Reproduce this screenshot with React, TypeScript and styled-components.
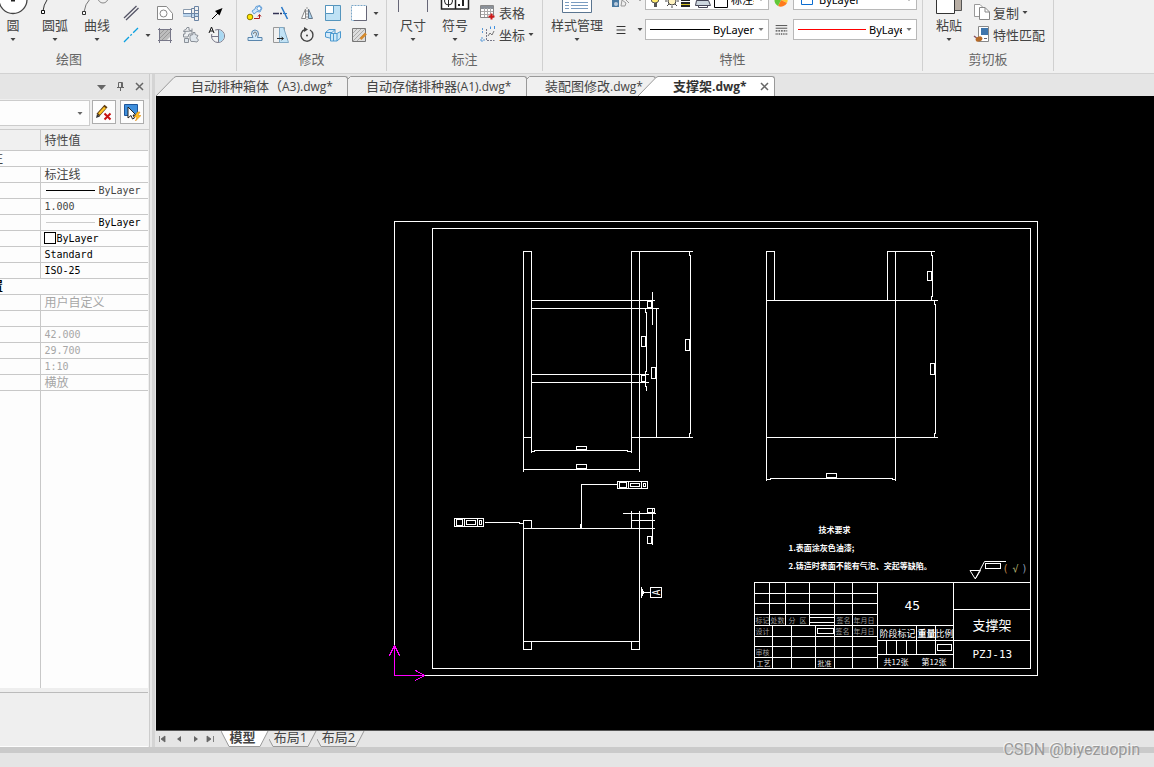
import React from "react";
import styled, { createGlobalStyle, css } from "styled-components";

const GlobalStyle = createGlobalStyle`
  * { box-sizing: border-box; }
  body {
    margin: 0;
    background: #e5e5e5;
    color: #444;
    font-family: "Open Sans", "Noto Sans CJK SC", sans-serif;
    font-size: 13px;
  }
  button, select { font: inherit; color: inherit; border: 0; padding: 0; margin: 0; background: none; }
  select { appearance: none; outline: none; }
`;

const Page = styled.div`
  display: flex;
  flex-direction: column;
  min-height: 100vh;
  overflow: hidden;
`;

/* ---------- ribbon ---------- */

const Ribbon = styled.header`
  display: flex;
  height: 74px;
  padding-bottom: 2px;
  background: #f0f0f0;
  border-bottom: 1px solid #d2d2d2;
  overflow: hidden;
`;

const Group = styled.section<{ $width: number; $scrolled?: number }>`
  display: flex;
  flex-direction: column;
  justify-content: flex-end;
  flex: none;
  width: ${(p) => p.$width}px;
  margin-left: ${(p) => -(p.$scrolled ?? 0)}px;
  border-right: 1px solid #d0d0d0;
`;

const GroupBody = styled.div<{ $end?: boolean }>`
  display: flex;
  align-items: flex-end;
  justify-content: ${(p) => (p.$end ? "flex-end" : "flex-start")};
  padding: ${(p) => (p.$end ? "0 6px 0 0" : "0 0 0 5px")};
`;

const GroupTitle = styled.h2`
  margin: 0;
  height: 23px;
  line-height: 23px;
  font-size: 13px;
  font-weight: 400;
  color: #666;
  text-align: center;
`;

const BigButton = styled.button<{ $width?: number }>`
  display: flex;
  flex-direction: column;
  align-items: center;
  justify-content: flex-end;
  flex: none;
  width: ${(p) => p.$width ?? 42}px;
  height: 68px;
  padding-bottom: 4px;
  line-height: 20px;
  white-space: nowrap;
  svg { flex: none; display: block; }
`;

const ToolGrid = styled.div<{ $cols: string }>`
  display: grid;
  grid-template-columns: ${(p) => p.$cols};
  grid-auto-rows: 22px;
  padding-bottom: 2px;
`;

const ToolButton = styled.button`
  display: flex;
  align-items: center;
  justify-content: center;
  svg { display: block; }
`;

const RowButton = styled.button`
  display: flex;
  align-items: center;
  gap: 2px;
  height: 22px;
  white-space: nowrap;
  svg { display: block; flex: none; }
`;

const RowTools = styled.div`
  display: flex;
  flex-direction: column;
  padding: 0 0 3px 3px;
`;

const PropertyGrid = styled.div`
  display: grid;
  flex: none;
  grid-template-columns: 28px 10px 124px 24px 124px;
  grid-auto-rows: 21px;
  row-gap: 9px;
  padding-bottom: 8px;
  margin-left: 1px;
`;

const ComboBox = styled.div`
  display: flex;
  align-items: center;
  gap: 3px;
  padding: 0 3px 0 4px;
  background: #fff;
  border: 1px solid #b8b8b8;
  font-family: "Noto Sans", "Noto Sans CJK SC", sans-serif;
  font-size: 11px;
  color: #000;
  svg { display: block; flex: none; }
  select { flex: 1; min-width: 0; height: 19px; overflow: hidden; text-overflow: clip; }
`;

const ComboLine = styled.i<{ $width: number; $color: string }>`
  flex: none;
  width: ${(p) => p.$width}px;
  height: 1px;
  background: ${(p) => p.$color};
`;

const Caret = ({ color = "#444" }: { color?: string }) => (
  <svg width="8" height="9" viewBox="0 0 8 9" aria-hidden="true">
    <path d="M1.500 3H6.500L4 6Z" fill={color} />
  </svg>
);

const Icon = ({ size = 18, children }: { size?: number; children: React.ReactNode }) => (
  <svg width={size} height={size} viewBox="0 0 18 18" fill="none" stroke="#667" aria-hidden="true">
    {children}
  </svg>
);

const icons = {
  parallel: (
    <Icon><path d="M2 14 14.500 2M4 16 16.500 4" stroke="#556" strokeWidth="1.300" /></Icon>
  ),
  centerLine: (
    <Icon><path d="M2 16 16 2" stroke="#0aa0e0" strokeWidth="1.300" strokeDasharray="7 2 2 2" /></Icon>
  ),
  region: (
    <Icon><path d="M1.500 2.500H10.500L16.500 9.500V15.500H1.500Z" fill="#fff" stroke="#888" /><circle cx="7.500" cy="9.500" r="3.500" stroke="#888" /></Icon>
  ),
  bolt: (
    <Icon>
      <path d="M1.500 5.500H9.500V12.500H1.500Z" fill="#fff" stroke="#8a9aac" />
      <path d="M1 9H17V12.500H1Z" fill="#bcd6ee" stroke="none" />
      <path d="M9.500 4.500H12.500V13.500H9.500ZM12.500 2.500H16.500V16.500H12.500Z" stroke="#6a84a4" />
      <path d="M1 9.500H16M12 6.500H17M12 12.500H17" stroke="#6a84a4" />
    </Icon>
  ),
  arrow: (
    <Icon><path d="M4 15 11 8" stroke="#000" /><path d="M14.500 4 11.500 11.500 7 7Z" fill="#000" stroke="none" /></Icon>
  ),
  hatch: (
    <Icon>
      <path d="M3.500 2V17M14.500 2V17M2 3.500H16M2 14.500H16" stroke="#778" />
      <path d="M4 4H14V11L11 14H4Z" fill="#bdbdbd" stroke="none" />
      <path d="M4 8 8 4M4 12 12 4M6 14 14 6" stroke="#999" />
    </Icon>
  ),
  gear: (
    <Icon>
      <path d="M1.500 4.500 4 3.500 5 1.500H7V4L10 5V2.500M10 5V8H7L6 11H1.500V8H3V5.500H1.500Z" stroke="#8a9098" fill="#eceef0" />
      <path d="M8 9.500 11 8.500V6.500H13V8.500L16 9.500 14.500 12 16.500 14 15 16 12 15.500H9L8 13ZM2.500 12.500H6.500V16.500H2.500Z" stroke="#8a9098" fill="#dfe6ec" />
    </Icon>
  ),
  clock: (
    <Icon>
      <circle cx="10" cy="10" r="6.500" fill="#f4f4f4" stroke="#778" />
      <path d="M10 10V4A6 6 0 0 1 16 10 6 6 0 0 1 10 16Z" fill="#a9d8f2" stroke="none" />
      <path d="M0 0H7V8H0Z" fill="#f0f0f0" stroke="none" />
      <path d="M1 7 3.500 1 6 7M2 5H5" stroke="#111" />
      <path d="M4 10.500H10M10.500 4V16" stroke="#778" />
    </Icon>
  ),
  copyShape: (
    <Icon>
      <path d="M6 7 9 5 10 2.500 14 1.500 16 4 14 8 11 7.500 8 10Z" fill="#cfe8fa" stroke="#66a0d8" />
      <circle cx="13" cy="4.500" r="2" fill="#fff" stroke="#66a0d8" />
      <circle cx="4" cy="13" r="2.800" fill="#ffe500" stroke="#8a7a00" />
      <path d="M8 14.500H13.500V11M12 12.500 13.500 10.500 15 12.500" stroke="#b02020" />
    </Icon>
  ),
  trim: (
    <Icon><path d="M1 9.500H7M8 9.500H10" stroke="#335" strokeWidth="1.400" /><path d="M11 9.500H15" stroke="#2878c8" /><path d="M9.500 3 15.500 15" stroke="#2878c8" strokeWidth="1.500" /></Icon>
  ),
  mirror: (
    <Icon><path d="M7.500 5V14.500H3.500Z" fill="#fff" stroke="#888" /><path d="M10.500 5V14.500H14.500Z" fill="#a9d2ef" stroke="#678" /><path d="M9 3V16" stroke="#999" strokeDasharray="2 1" /></Icon>
  ),
  scale: (
    <Icon><path d="M1.500 1.500H16.500V16.500H1.500Z" fill="#bfe2f5" stroke="#5595bd" /><path d="M1.500 1.500H9.500V9.500H1.500Z" fill="#fff" stroke="#5595bd" /></Icon>
  ),
  dashedRect: (
    <Icon><path d="M1.500 1.500H16.500V16.500H1.500Z" fill="#fff" stroke="#7aa7c9" strokeDasharray="2 1" /><path d="M16.500 2V16.500H4" stroke="#667" /></Icon>
  ),
  offset: (
    <Icon><path d="M2 14.500H16V11.500H11.500L12.500 8A3.500 4 0 0 0 5.500 8L7 11.500H2Z" fill="#d4eafa" stroke="#5a86ad" /><path d="M7.500 8A1.500 2 0 0 1 10.500 8L9.500 10.500" stroke="#777" /></Icon>
  ),
  chamfer: (
    <Icon><path d="M1.500 1.500H12.500V16.500H1.500Z" stroke="#999" /><path d="M7.500 1.500H11.500L16.500 16.500H7.500Z" fill="#c2e3f6" stroke="#7fa8c4" /><path d="M5 12.500H11M9.500 11 11.500 12.500 9.500 14" stroke="#222" /></Icon>
  ),
  rotate: (
    <Icon><path d="M7 3.500A6 6 0 1 0 12 4" stroke="#444" strokeWidth="1.400" /><path d="M6 1 10 3.500 6 6Z" fill="#444" stroke="none" /><circle cx="9" cy="9.500" r="1" fill="#444" stroke="none" /></Icon>
  ),
  solid: (
    <Icon><path d="M1.500 6.500 5 3.500H11L8 6.500V12.500L1.500 11ZM8 6.500H1.500M8 12.500 11 9.500V3.500" fill="#d5eafa" stroke="#4c99cf" /><path d="M6.500 7.500H13L16.500 5.500V12L13 15H6.500ZM13 7.500V15M9.500 7.500V15" fill="#cce8f8" stroke="#4c99cf" /></Icon>
  ),
  hatchEdit: (
    <Icon>
      <path d="M2.500 2.500H15.500V15.500H2.500Z" fill="#ddd" stroke="#777" />
      <path d="M3 7 7 3M3 11 11 3M3 15 15 3M7 15 15 7" stroke="#aaa" />
      <path d="M10.500 13 16 7.500" stroke="#d68a2c" strokeWidth="2.500" />
    </Icon>
  ),
  table: (
    <Icon><path d="M1.500 2.500H14.500V14.500H1.500Z" fill="#fff" stroke="#888" /><path d="M2 4.500H14" stroke="#8a9098" strokeWidth="3" /><path d="M2 8.500H14M2 11.500H14M5.500 5V14M8.500 5V14M11.500 5V14" stroke="#aaa" /><path d="M12.500 10.500V16.500M9.500 13.500H15.500" stroke="#d01818" strokeWidth="2" /></Icon>
  ),
  ordinate: (
    <Icon><path d="M3.500 3V8M1 15H6M3 12V17" stroke="#5a9ad8" strokeDasharray="2 1" /><path d="M7.500 4V15.500H15.500" stroke="#778" strokeDasharray="2 1" /><path d="M9 11 11 8 13 10 15 6" stroke="#777" /><path d="M11.500 1.500V4M15.500 1V4" stroke="#4090e0" /></Icon>
  ),
  pages: (
    <Icon><path d="M1.500 1.500H7L10.500 5V13.500H1.500Z" fill="#fff" stroke="#999" /><path d="M6.500 4.500H12L16.500 9V16.500H6.500Z" fill="#fff" stroke="#888" /><path d="M12 4.500V9H16.500" stroke="#888" /></Icon>
  ),
  match: (
    <Icon><path d="M5.500 1.500H15.500V16.500H5.500Z" fill="#fff" stroke="#888" /><path d="M8 3H15V10H8Z" fill="#3f76ad" stroke="none" /><path d="M11 13.500H14" /><path d="M1 11 5 14" stroke="#856" strokeWidth="1.500" /><ellipse cx="6" cy="14" rx="3.500" ry="2.500" fill="#b56a28" stroke="none" transform="rotate(-20 6 14)" /></Icon>
  ),
  lineWidth: (
    <Icon size={16}><path d="M4 5H14M4 9H14M4 13H14" stroke="#333" strokeWidth="1.200" /></Icon>
  ),
  lineType: (
    <Icon size={16}><path d="M3 4H16M3 7H16" stroke="#444" /><path d="M3 10H16" stroke="#444" strokeDasharray="2 1" strokeWidth="1.500" /><path d="M3 13.500H16" stroke="#444" strokeDasharray="1 1" strokeWidth="1.500" /></Icon>
  ),
};

const Tool = ({ label, icon }: { label: string; icon: React.ReactNode }) => (
  <ToolButton aria-label={label}>{icon}</ToolButton>
);

const RibbonBar = () => (
  <Ribbon>
    <Group $width={335} $scrolled={98}>
      <GroupBody $end>
        <BigButton>
          <svg width="30" height="30" viewBox="0 0 30 30">
            <circle cx="15" cy="14.500" r="14" fill="#fff" stroke="#444" strokeWidth="1.300" />
            <path d="M13 15.500H17" stroke="#222" strokeWidth="2" />
          </svg>
          圆
          <Caret />
        </BigButton>
        <BigButton>
          <svg width="30" height="30" viewBox="0 0 30 30" fill="none">
            <path d="M3 26Q4 14 18 4" stroke="#333" />
            <path d="M1.500 25.500H4.500V28.500H1.500Z" fill="#fff" stroke="#111" />
          </svg>
          圆弧
          <Caret />
        </BigButton>
        <BigButton>
          <svg width="30" height="30" viewBox="0 0 30 30" fill="none">
            <path d="M2 27Q3 19 8 14" stroke="#777" />
            <circle cx="21" cy="13" r="5" stroke="#888" />
            <path d="M.500 26.500H3.500V29.500H.500Z" fill="#fff" stroke="#333" />
          </svg>
          曲线
          <Caret />
        </BigButton>
        <ToolGrid $cols="26px 8px 26px 26px 26px">
          <Tool label="平行线" icon={icons.parallel} />
          <span />
          <Tool label="孔" icon={icons.region} />
          <Tool label="螺栓" icon={icons.bolt} />
          <Tool label="箭头" icon={icons.arrow} />
          <Tool label="中心线" icon={icons.centerLine} />
          <Tool label="更多线型" icon={<Caret />} />
          <Tool label="填充" icon={icons.hatch} />
          <Tool label="齿轮" icon={icons.gear} />
          <Tool label="局部放大" icon={icons.clock} />
        </ToolGrid>
      </GroupBody>
      <GroupTitle>绘图</GroupTitle>
    </Group>
    <Group $width={150}>
      <GroupBody>
        <ToolGrid $cols="26px 26px 26px 26px 26px 8px">
          <Tool label="复制对象" icon={icons.copyShape} />
          <Tool label="修剪" icon={icons.trim} />
          <Tool label="镜像" icon={icons.mirror} />
          <Tool label="缩放" icon={icons.scale} />
          <Tool label="矩形" icon={icons.dashedRect} />
          <Tool label="更多" icon={<Caret />} />
          <Tool label="偏移" icon={icons.offset} />
          <Tool label="倒角" icon={icons.chamfer} />
          <Tool label="旋转" icon={icons.rotate} />
          <Tool label="实体" icon={icons.solid} />
          <Tool label="编辑填充" icon={icons.hatchEdit} />
          <Tool label="更多" icon={<Caret />} />
        </ToolGrid>
      </GroupBody>
      <GroupTitle>修改</GroupTitle>
    </Group>
    <Group $width={156}>
      <GroupBody>
        <BigButton>
          <svg width="30" height="30" viewBox="0 0 30 30">
            <path d="M.500 6V27M29.500 6V27M0 12H30" stroke="#667" fill="none" />
          </svg>
          尺寸
          <Caret />
        </BigButton>
        <BigButton>
          <svg width="30" height="34" viewBox="0 0 30 34" fill="none" stroke="#222">
            <path d="M1.500 12.500H28.500V28H1.500ZM15.500 12V28" fill="#fff" strokeWidth="1.500" />
            <circle cx="8.500" cy="20" r="4" />
            <path d="M8.500 14V26" />
            <path d="M18 24H20M22 24H24M23 18V25" strokeWidth="2" />
          </svg>
          符号
          <Caret />
        </BigButton>
        <RowTools>
          <RowButton>{icons.table}表格</RowButton>
          <RowButton>{icons.ordinate}坐标<Caret /></RowButton>
        </RowTools>
      </GroupBody>
      <GroupTitle>标注</GroupTitle>
    </Group>
    <Group $width={380}>
      <GroupBody>
        <BigButton $width={58}>
          <svg width="30" height="30" viewBox="0 0 30 30" fill="none">
            <path d="M.500 3.500H29.500V27.500H.500Z" fill="#fff" stroke="#5a7590" />
            <path d="M3 17.500H7M9 17.500H26M3 20.500H7M9 20.500H26M3 23.500H7M9 23.500H26" stroke="#7a9cc0" />
          </svg>
          样式管理
          <Caret />
        </BigButton>
        <PropertyGrid>
          <Tool
            label="图层"
            icon={
              <svg width="22" height="18" viewBox="0 0 22 18">
                <path d="M2 2H9V16H2Z" fill="#4777a0" />
                <circle cx="6" cy="13" r="2" fill="#bcd" />
                <path d="M12 9 16 12 15 15H11ZM16 9 19 12" fill="#eee" stroke="#999" />
              </svg>
            }
          />
          <Tool label="图层选项" icon={<Caret />} />
          <ComboBox>
            <svg width="78" height="19" viewBox="0 0 78 19" fill="none">
              <circle cx="5" cy="9" r="4" fill="#ffe96b" stroke="#555" />
              <path d="M4 13H7V17H4Z" fill="#555" />
              <circle cx="22" cy="11" r="4" fill="#fff3c0" stroke="#444" />
              <path d="M15 11H17M27 11H29M17 16 19 14M25 14 27 16M22 16V18" stroke="#444" />
              <path d="M31 10H40M31 13H40M31 16H40" stroke="#222" strokeWidth="2" />
              <path d="M31 14.500H40" stroke="#d4bf20" />
              <path d="M46.500 10.500H58.500L60.500 15.500H45.500Z" fill="#ccd6de" stroke="#445" />
              <path d="M48.500 15.500H57.500V17.500H48.500Z" fill="#fff" stroke="#445" />
              <path d="M64.500 5.500H77.500V17.500H64.500Z" fill="#fff" stroke="#000" />
            </svg>
            <select aria-label="图层"><option>标注线</option></select>
            <Caret color="#777" />
          </ComboBox>
          <Tool
            label="颜色"
            icon={
              <svg width="14" height="16" viewBox="0 0 14 16">
                <path d="M7 8V1A7 7 0 0 1 13 11Z" fill="#ffc928" />
                <path d="M7 8 13 11A7 7 0 0 1 4 14Z" fill="#ff7a1c" />
                <path d="M7 8 4 14A7 7 0 0 1 7 1Z" fill="#62c837" />
              </svg>
            }
          />
          <ComboBox>
            <svg width="18" height="19" viewBox="0 0 18 19">
              <path d="M3.500 4.500H14.500V14.500H3.500Z" fill="#fff" stroke="#0a6cd0" />
            </svg>
            <select aria-label="颜色"><option>ByLayer</option></select>
            <Caret color="#777" />
          </ComboBox>
          <Tool label="线宽" icon={icons.lineWidth} />
          <Tool label="线宽选项" icon={<Caret />} />
          <ComboBox>
            <ComboLine $width={60} $color="#000" />
            <select aria-label="线宽"><option>ByLayer</option></select>
            <Caret color="#777" />
          </ComboBox>
          <Tool label="线型" icon={icons.lineType} />
          <ComboBox>
            <ComboLine $width={68} $color="#ff0000" />
            <select aria-label="线型"><option>ByLayer</option></select>
            <Caret color="#777" />
          </ComboBox>
        </PropertyGrid>
      </GroupBody>
      <GroupTitle>特性</GroupTitle>
    </Group>
    <Group $width={131}>
      <GroupBody>
        <BigButton>
          <svg width="26" height="30" viewBox="0 0 26 30">
            <path d="M12 0H25.500V25.500H12Z" fill="#b8aea4" stroke="#555" />
            <path d="M.500 4.500H18.500V28.500H.500Z" fill="#fff" stroke="#333" />
          </svg>
          粘贴
          <Caret />
        </BigButton>
        <RowTools>
          <RowButton>{icons.pages}复制<Caret /></RowButton>
          <RowButton>{icons.match}特性匹配</RowButton>
        </RowTools>
      </GroupBody>
      <GroupTitle>剪切板</GroupTitle>
    </Group>
  </Ribbon>
);

/* ---------- property palette ---------- */

const Workspace = styled.div`
  display: flex;
  flex: 1;
  min-height: 0;
`;

const Palette = styled.aside`
  display: flex;
  flex-direction: column;
  flex: none;
  width: 150px;
  background: #efefef;
  border-right: 1px solid #ccc;
`;

const PaletteHeader = styled.div`
  display: flex;
  align-items: center;
  justify-content: flex-end;
  gap: 3px;
  height: 25px;
  padding-right: 2px;
  background: #e5e5e5;
  button { width: 16px; height: 16px; }
  svg { display: block; }
`;

const PaletteTools = styled.div`
  display: flex;
  gap: 4px;
  height: 31px;
  padding: 1px 5px 5px 0;
  border-bottom: 1px solid #ccc;
`;

const PaletteSelect = styled.label`
  display: flex;
  align-items: center;
  flex: 1;
  height: 26px;
  margin-right: -2px;
  padding-right: 5px;
  background: #fdfdfd;
  border: solid #ccc;
  border-width: 1px 1px 1px 0;
  select { flex: 1; min-width: 0; }
`;

const PaletteButton = styled.button`
  width: 24px;
  height: 24px;
  background: #fdfdfd;
  border: 1px solid #adadad;
  svg { display: block; margin: 2px; }
`;

const TableArea = styled.div`
  flex: 1;
  display: flex;
  flex-direction: column;
  margin-right: 1px;
  background: #fdfdfd;
`;

const PropertyTable = styled.table`
  width: 100%;
  border-collapse: collapse;
  table-layout: fixed;
  tr { height: 16px; }
  th, td {
    height: 16px;
    padding: 0 0 0 4px;
    border-bottom: 1px solid #c8c8c8;
    line-height: 15px;
    text-align: left;
    font-weight: 400;
    font-size: 12px;
    white-space: nowrap;
  }
  thead th { height: 20px; padding-top: 2px; background: #f0f0f0; }
  th + th, th + td { border-left: 1px solid #c8c8c8; }
`;

const ValueText = styled.span<{ $tone?: "strong" | "dim"; $mono?: boolean }>`
  display: flex;
  align-items: center;
  gap: 4px;
  height: 15px;
  color: ${(p) => (p.$tone === "strong" ? "#000" : p.$tone === "dim" ? "#a6a6a6" : "#444")};
  ${(p) =>
    p.$mono &&
    css`
      font-family: "DejaVu Sans Mono", monospace;
      font-size: 10px;
    `}
`;

const ColorBox = styled.i`
  width: 12px;
  height: 12px;
  margin: 0 -3px 0 -1px;
  border: 1px solid #000;
  background: #fff;
`;

const LineSample = styled.i<{ $light?: boolean }>`
  width: 49px;
  height: 1px;
  margin-left: 1px;
  background: ${(p) => (p.$light ? "#ccc" : "#000")};
`;

const SectionCell = styled.th<{ $strong?: boolean }>`
  && { padding: 0; color: ${(p) => (p.$strong ? "#000" : "#444")}; font-weight: ${(p) => (p.$strong ? 700 : 400)}; }
  span { display: block; margin-left: -9px; }
`;

const TableFill = styled.div`
  flex: 1;
  width: 41px;
  border-right: 1px solid #c8c8c8;
`;

const PaletteHint = styled.div`
  height: 58px;
  margin: 0 1px 1px 0;
  background: #efefef;
  border-top: 4px solid #eee;
  box-shadow: inset 0 1px #bbb, 0 1px #fdfdfd;
`;

type Row = { text?: string; tone?: "strong" | "dim"; mono?: boolean; mark?: React.ReactNode };

const generalRows: Row[] = [
  { text: "标注线" },
  { text: "ByLayer", mono: true, mark: <LineSample /> },
  { text: "1.000", mono: true },
  { text: "ByLayer", mono: true, tone: "strong", mark: <LineSample $light /> },
  { text: "ByLayer", mono: true, tone: "strong", mark: <ColorBox /> },
  { text: "Standard", mono: true, tone: "strong" },
  { text: "ISO-25", mono: true, tone: "strong" },
];

const paperRows: Row[] = [
  { text: "用户自定义", tone: "dim" },
  {},
  { text: "42.000", tone: "dim", mono: true },
  { text: "29.700", tone: "dim", mono: true },
  { text: "1:10", tone: "dim", mono: true },
  { text: "横放", tone: "dim" },
];

const renderRow = (row: Row, i: number) => (
  <tr key={i}>
    <th scope="row" />
    <td>
      <ValueText $tone={row.tone} $mono={row.mono}>
        {row.mark}
        {row.text}
      </ValueText>
    </td>
  </tr>
);

const PropertyPalette = () => (
  <Palette>
    <PaletteHeader>
      <button aria-label="菜单">
        <svg width="16" height="16"><path d="M4 6H13L8.500 11Z" fill="#666" /></svg>
      </button>
      <button aria-label="固定">
        <svg width="16" height="16" fill="none" stroke="#666"><path d="M6.500 3.500H10.500V8.500H6.500ZM9.500 3V9M5 8.500H12M8.500 9V12" /></svg>
      </button>
      <button aria-label="关闭">
        <svg width="16" height="16"><path d="M5 4 12 11M12 4 5 11" stroke="#666" strokeWidth="1.500" /></svg>
      </button>
    </PaletteHeader>
    <PaletteTools>
      <PaletteSelect>
        <select aria-label="选择对象"><option></option></select>
        <Caret color="#666" />
      </PaletteSelect>
      <PaletteButton aria-label="清除选择">
        <svg width="18" height="18" fill="none">
          <path d="M3 12 11 3" stroke="#5c3a10" strokeWidth="4" />
          <path d="M4 11 10 4.500" stroke="#ffc425" strokeWidth="2.500" />
          <path d="M1 15 2 11 5 13.500Z" fill="#333" />
          <path d="M9.500 10.500 15.500 16.500M15.500 10.500 9.500 16.500" stroke="#c81414" strokeWidth="2" />
        </svg>
      </PaletteButton>
      <PaletteButton aria-label="快速选择">
        <svg width="18" height="18">
          <path d="M1.500 1.500H14.500V12.500H1.500Z" fill="#3f8fdc" stroke="#1d559a" />
          <path d="M5 4V15L8 12.500 9.500 16 11.500 15 10 12H13Z" fill="#fff" stroke="#222" />
          <path d="M14.500 9 11 14H14L12.500 18 18 12.500H15L17 9Z" fill="#ffc020" stroke="#d87800" strokeWidth=".500" />
        </svg>
      </PaletteButton>
    </PaletteTools>
    <TableArea>
      <PropertyTable>
        <colgroup><col width="40" /><col /></colgroup>
        <thead><tr><th scope="col" /><th scope="col">特性值</th></tr></thead>
        <tbody>
          <tr><SectionCell colSpan={2}><span>注</span></SectionCell></tr>
          {generalRows.map(renderRow)}
          <tr><SectionCell colSpan={2} $strong><span>置</span></SectionCell></tr>
          {paperRows.map(renderRow)}
        </tbody>
      </PropertyTable>
      <TableFill />
    </TableArea>
    <PaletteHint />
  </Palette>
);

const Splitter = styled.div`
  flex: none;
  width: 6px;
  background: #e5e5e5;
  border-left: 2px solid #e8e8e8;
  box-shadow: inset 3px 0 #d4d4d4;
`;

/* ---------- document area ---------- */

const DocumentArea = styled.main`
  display: flex;
  flex-direction: column;
  flex: 1;
  min-width: 0;
`;

const FileTabs = styled.nav`
  display: flex;
  height: 22px;
  padding-top: 2px;
`;

const FileTab = styled.div<{ $active?: boolean; $width: number }>`
  display: flex;
  flex: none;
  width: ${(p) => p.$width}px;
  height: 20px;
  margin-left: ${(p) => (p.$active ? -18 : 0)}px;
  z-index: ${(p) => (p.$active ? 1 : 0)};
  > svg { display: block; flex: none; }
  color: ${(p) => (p.$active ? "#333" : "#444")};
  font-weight: ${(p) => (p.$active ? 700 : 400)};
`;

const FileTabFace = styled.div<{ $active?: boolean }>`
  display: flex;
  align-items: center;
  justify-content: ${(p) => (p.$active ? "space-between" : "flex-start")};
  flex: 1;
  padding: 0 4px 0 15px;
  background: ${(p) => (p.$active ? "#fff" : "#f0f0f0")};
  border: solid #999;
  border-width: 1px 1px 0 0;
  border-top-right-radius: 3px;
  white-space: nowrap;
  font-size: 12px;
  span { font-size: 13px; }
  button { line-height: 18px; }
  svg { display: block; }
`;

const Slant = ({ active }: { active?: boolean }) => (
  <svg width="20" height="20" viewBox="0 0 20 20" aria-hidden="true">
    <path d="M0 20 18 1.500 20 .500V20Z" fill={active ? "#fff" : "#f0f0f0"} />
    <path d="M0 20 18 1.500 20 .500" stroke="#999" fill="none" />
  </svg>
);

const Notch = () => (
  <svg width="3" height="20" viewBox="0 0 3 20" aria-hidden="true">
    <path d="M0 3 2.500 .500H3V20H0Z" fill="#f0f0f0" />
    <path d="M0 3 2.500 .500H3" stroke="#999" fill="none" />
  </svg>
);

const Canvas = styled.div`
  flex: 1;
  min-height: 0;
  background: #000;
  overflow: hidden;
  svg { display: block; width: 100%; height: 100%; }
`;

const SheetText = styled.text<{ $size: number; $color?: string; $bold?: boolean; $mono?: boolean }>`
  font-family: ${(p) => (p.$mono ? '"DejaVu Sans Mono",' : "")} "Noto Sans CJK SC", sans-serif;
  font-size: ${(p) => p.$size}px;
  font-weight: ${(p) => (p.$bold ? 700 : 400)};
  fill: ${(p) => p.$color ?? "#fff"};
  stroke: none;
`;

/* small empty frames that stand for the dimension values: x, y, width, height */
const valueBoxes = [
  [685, 339, 4, 11], [641, 336, 4, 10], [641, 375, 4, 6], [647, 301, 4, 6], [651, 367, 4, 11],
  [576, 446, 10, 3], [576, 464, 10, 4], [927, 271, 4, 9], [930, 363, 4, 11], [826, 473, 10, 4],
  [647, 508, 7, 4], [647, 536, 4, 7], [619, 482, 7, 5], [630, 483, 9, 3], [643, 483, 2, 3],
  [456, 519, 6, 6], [466, 520, 9, 4], [479, 520, 2, 4], [985, 563, 15, 5],
  [817, 628, 16, 5], [937, 644, 14, 6],
];

const sheetLabels: [string, number, number, number, string?, boolean?][] = [
  ["技术要求", 818, 532, 8, "#fff", true],
  ["1.表面涂灰色油漆;", 788, 550, 8, "#fff", true],
  ["2.铸造时表面不能有气泡、突起等缺陷。", 788, 568, 8, "#fff", true],
  ["标记", 755, 622, 7, "#9a9a9a"],
  ["处数", 770, 622, 7, "#9a9a9a"],
  ["分", 788, 622, 7, "#9a9a9a"],
  ["区", 799, 622, 7, "#9a9a9a"],
  ["签名", 836, 622, 7, "#9a9a9a"],
  ["年月日", 853, 622, 7, "#9a9a9a"],
  ["设计", 755, 633, 7, "#9a9a9a"],
  ["签名", 835, 633, 7, "#9a9a9a"],
  ["年月日", 853, 633, 7, "#9a9a9a"],
  ["审核", 755, 654, 7, "#9a9a9a"],
  ["工艺", 756, 665, 7, "#ddd"],
  ["批准", 817, 665, 7, "#ddd"],
  ["阶段标记", 879, 636, 9],
  ["重量", 917, 636, 9, "#fff", true],
  ["比例", 935, 636, 9],
  ["共12张", 883, 664, 8, "#fff"],
  ["第12张", 921, 664, 8, "#fff"],
  ["支撑架", 972, 629, 13],
];

const Drawing = () => (
  <svg role="img" aria-label="支撑架">
    <g transform="translate(-155.500 -95.500)" fill="none" stroke="#fff" strokeLinecap="square" shapeRendering="crispEdges">
      <path d="M394 221H1037V675H394ZM432 228H1030V668H432Z" />
      {/* front view */}
      <path d="M523 471V251H531V452M639 471V251M631 452V251H692M531 300H654M531 308H658M531 374H648M531 382H648M523 437H531M631 437H692" />
      <path d="M689 251V255M690 255V433M689 433V437M652 292V324M645 308V312M646 312V371M645 371V386M646 386V390M656 308V437" />
      <path d="M531 451H534M534 450H627M627 451H631M523 469H639" />
      {/* side view */}
      <path d="M766 480V251H774V300M887 300V251H934M895 251V480M766 300H937M766 437H937" />
      <path d="M931 251V255M932 255V296M931 296V300M934 300V304M935 304V433M934 433V437M766 479H770M770 478H892M892 479H895" />
      {/* top view with its leaders and datum */}
      <path d="M523 649V520H531V528M523 528H654M639 511V649H631V641M523 641H639M523 649H531V641M631 511V528M623 513H655M631 520H654M652 509V544" />
      <path d="M617 484H581V528M580 524V528M617 481H647V488H617ZM628 481V488M641 481V488" />
      <path d="M454 518H483V526H454ZM464 518V526M477 518V526M485 522H519M519 523H523" />
      <path d="M641 587V597M642 589V595M643 591V593M643 592H650M650 587H661V597H650Z" />
      {valueBoxes.map(([x, y, w, h]) => (
        <rect key={`${x}-${y}`} x={x} y={y} width={w} height={h} />
      ))}
      <SheetText $size={10} $mono transform="translate(659 595) rotate(-90)">A</SheetText>
      {/* title block */}
      <path d="M754 668V582H1030M877 582V668M953 582V668M754 593H877M754 603H877M754 614H877M754 625H953M754 636H877M754 646H877M754 657H877" />
      <path d="M769 582V625M785 582V625M809 582V625M834 582V668M852 582V668M772 625V668M791 625V668M815 625V668M809 617H834M809 622H834" />
      <path d="M877 640H1030M877 654H953M886 640V654M896 640V654M906 640V654M916 625V654M935 625V654M953 609H1030" />
      {sheetLabels.map(([text, x, y, size, color, bold]) => (
        <SheetText key={`${x}-${y}`} x={x} y={y} $size={size} $color={color} $bold={bold}>{text}</SheetText>
      ))}
      <SheetText x={904} y={609} $size={13} $mono>45</SheetText>
      <SheetText x={972} y={657} $size={11} $mono>PZJ-13</SheetText>
      {/* surface finish mark */}
      <path d="M970 570H980L975 578ZM975 578 984 561H1005" shapeRendering="auto" />
      <SheetText x={1002} y={571} $size={10} $mono $color="#c08a50">(</SheetText>
      <SheetText x={1012} y={571} $size={10} $mono $color="#b9b978">√</SheetText>
      <SheetText x={1021} y={571} $size={10} $mono $color="#8a9ab0">)</SheetText>
      <path d="M394 646V675H424M394 645 389 655M394 645 399 655M424 675 415 670M424 675 415 680" stroke="#f0f" />
    </g>
  </svg>
);

const LayoutTabs = styled.nav`
  display: flex;
  height: 17px;
  padding-left: 1px;
  border-top: 1px solid #555;
`;

const NavButton = styled.button`
  width: 16px;
  height: 16px;
  svg { display: block; }
`;

const LayoutTab = styled.button<{ $active?: boolean }>`
  position: relative;
  isolation: isolate;
  width: 48px;
  height: 16px;
  padding: 0 5px 3px 0;
  line-height: 13px;
  z-index: ${(p) => (p.$active ? 1 : 0)};
  font-weight: ${(p) => (p.$active ? 700 : 400)};
  white-space: nowrap;
  svg { position: absolute; left: 0; top: 0; z-index: -1; }
`;

const StatusBar = styled.footer`
  position: relative;
  height: 20px;
  background: #e5e5e5;
  border-top: 6px solid #cacaca;
`;

const Watermark = styled.span`
  position: absolute;
  right: 14px;
  top: -13px;
  line-height: 20px;
  font-family: Roboto, "Liberation Sans", sans-serif;
  font-size: 16px;
  color: #999;
  text-shadow: -1px -1px #f4f4f4;
`;

const navShapes = ["M2.500 5V11M8 5V11L4 8Z", "M8 5V11L4 8Z", "M5 5V11L9 8Z", "M2 5V11L6 8ZM8.500 5V11"];
const navNames = ["第一个", "上一个", "下一个", "最后一个"];

export default function App() {
  return (
    <Page>
      <GlobalStyle />
      <RibbonBar />
      <Workspace>
        <PropertyPalette />
        <Splitter />
        <DocumentArea>
          <FileTabs>
            <FileTab $width={192}><Slant /><FileTabFace><button><span>自动排种箱体（</span>A3).dwg*</button></FileTabFace></FileTab>
            <FileTab $width={179}><Notch /><FileTabFace><button><span>自动存储排种器</span>(A1).dwg*</button></FileTabFace></FileTab>
            <FileTab $width={129}><Notch /><FileTabFace><button><span>装配图修改</span>.dwg*</button></FileTabFace></FileTab>
            <FileTab $width={137} $active>
              <Slant active />
              <FileTabFace $active>
                <button><span>支撑架</span>.dwg*</button>
                <button aria-label="关闭">
                  <svg width="11" height="11"><path d="M2 2 9 9M9 2 2 9" stroke="#666" strokeWidth="1.500" /></svg>
                </button>
              </FileTabFace>
            </FileTab>
          </FileTabs>
          <Canvas><Drawing /></Canvas>
          <LayoutTabs>
            {navShapes.map((d, i) => (
              <NavButton key={d} aria-label={navNames[i]}>
                <svg width="16" height="16"><path d={d} fill="#666" stroke={i % 3 === 0 ? "#666" : "none"} strokeWidth=".800" /></svg>
              </NavButton>
            ))}
            {["模型", "布局1", "布局2"].map((name, i) => (
              <LayoutTab key={name} $active={i === 0}>
                <svg width="48" height="16">
                  <path d={i === 0 ? "M0 0 8 15.500H39L47 0" : "M0 8 4 15.500H39L47 0"} fill={i === 0 ? "#fff" : "#ebebeb"} stroke="#999" />
                </svg>
                {name}
              </LayoutTab>
            ))}
          </LayoutTabs>
        </DocumentArea>
      </Workspace>
      <StatusBar><Watermark>CSDN @biyezuopin</Watermark></StatusBar>
    </Page>
  );
}
